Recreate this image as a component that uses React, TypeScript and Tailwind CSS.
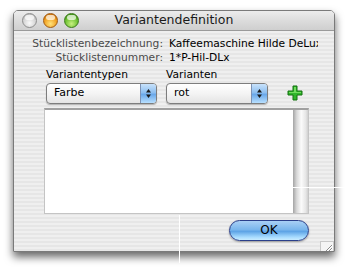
import React from "react";

const font = "font-['DejaVu_Sans','Liberation_Sans',sans-serif]";

function Light({ color }: { color: "gray" | "orange" | "green" }) {
  const bg =
    color === "gray"
      ? "bg-[radial-gradient(circle_at_50%_70%,#fafafa,#d4d4d4_55%,#a8a8a8)] border-[#8c8c8c]"
      : color === "orange"
        ? "bg-[radial-gradient(circle_at_50%_75%,#ffe27a,#f0a020_55%,#b85a08)] border-[#a05a10]"
        : "bg-[radial-gradient(circle_at_50%_75%,#c8f080,#6cc030_55%,#2e7a10)] border-[#3a7a18]";
  return (
    <div className={`relative h-[15px] w-[15px] rounded-full border ${bg}`}>
      <div className="mx-auto mt-[1px] h-[5px] w-[9px] rounded-full bg-white/70" />
    </div>
  );
}

function Popup({ label, width }: { label: string; width: string }) {
  return (
    <div
      className={`flex h-[21px] ${width} overflow-hidden rounded-[4px] border border-[#7d7d7d] bg-[linear-gradient(#ffffff,#f4f4f4_50%,#e4e4e4)] shadow-[0_1px_1px_rgba(0,0,0,0.25)]`}
    >
      <div className="flex flex-1 items-center pl-[7px] text-[11px] text-black">{label}</div>
      <div className="flex w-[16px] items-center justify-center border-l border-[#7d92b4] bg-[linear-gradient(#c8e2fb,#8ebff0_45%,#6aa8ea_55%,#b8e0ff)]">
        <svg width="7" height="11" viewBox="0 0 7 11">
          <path d="M3.5 1 L6 4.5 H1 Z" fill="#1a1a1a" />
          <path d="M3.5 10 L6 6.5 H1 Z" fill="#1a1a1a" />
        </svg>
      </div>
    </div>
  );
}

export default function App() {
  return (
    <div className={`relative h-[273px] w-[345px] overflow-hidden bg-white ${font}`}>
      <div className="ml-[13px] mt-[10px] flex h-[242px] w-[322px] flex-col overflow-hidden rounded-t-[5px] border border-[#7a7a7a] shadow-[0_5px_8px_rgba(0,0,0,0.6)]">
        {/* title bar */}
        <div className="grid h-[22px] grid-cols-[1fr_auto_1fr] items-center border-b border-[#9a9a9a] bg-[linear-gradient(#ececec,#dcdcdc_50%,#cfcfcf)]">
          <div className="flex items-center gap-[6px] pl-[8px]">
            <Light color="gray" />
            <Light color="orange" />
            <Light color="green" />
          </div>
          <div className="text-[12.5px] text-[#1a1a1a]">Variantendefinition</div>
          <div />
        </div>

        {/* body */}
        <div className="flex flex-1 flex-col bg-[repeating-linear-gradient(#efefef_0px,#efefef_2px,#e6e6e6_2px,#e6e6e6_4px)] text-[10.7px]">
          <div className="mt-[6px] grid grid-cols-[149px_149px] gap-x-[6px] leading-[14px]">
            <div className="text-right text-[#4a4a4a]">Stücklistenbezeichnung:</div>
            <div className="overflow-hidden whitespace-nowrap text-black">Kaffeemaschine Hilde DeLuxe</div>
            <div className="text-right text-[#4a4a4a]">Stücklistennummer:</div>
            <div className="text-black">1*P-Hil-DLx</div>
          </div>

          <div className="mt-[3px] flex pl-[32px] leading-[14px] text-black">
            <div className="w-[120px]">Variantentypen</div>
            <div>Varianten</div>
          </div>

          <div className="mt-[1px] flex items-center pl-[32px]">
            <Popup label="Farbe" width="w-[111px]" />
            <div className="ml-[9px]">
              <Popup label="rot" width="w-[102px]" />
            </div>
            <svg className="ml-[19px]" width="16" height="16" viewBox="0 0 16 16">
              <path
                d="M6 1 H10 V6 H15 V10 H10 V15 H6 V10 H1 V6 H6 Z"
                fill="#2fb52a"
                stroke="#13700f"
                strokeWidth="1"
              />
              <path d="M7 2 H9 V7 H14 V8 H2 V7 H7 Z" fill="#6fdc5c" />
            </svg>
          </div>

          <div className="ml-[30px] mt-[4px] flex h-[106px] w-[265px] border border-t-2 border-[#c4c4c4] border-t-[#a0a0a0] bg-white">
            <div className="flex-1" />
            <div className="w-[15px] bg-[linear-gradient(to_right,#a4a4a4,#d8d8d8_25%,#fbfbfb_55%,#e6e6e6_85%,#cfcfcf)]" />
          </div>

          <div className="mt-[6px] flex">
            <div className="ml-[215px] flex h-[21px] w-[80px] items-center justify-center rounded-full border border-[#2a3f8a] bg-[linear-gradient(#a9d0f5,#7ab6ec_45%,#5ea4e6_55%,#a8dcff_85%,#c8ecff)] text-[12px] text-black shadow-[0_1px_2px_rgba(0,0,0,0.35)]">
              OK
            </div>
          </div>

          <div className="mt-auto flex justify-end">
            <svg width="14" height="13" viewBox="0 0 14 13">
              <rect x="0.5" y="0.5" width="13" height="12.5" fill="#f4f4f4" stroke="#c8c8c8" />
              <path d="M12 4 L4 12 M12 7 L7 12 M12 10 L10 12" stroke="#8a8a8a" strokeWidth="1" />
              <path d="M13 4 L5 12 M13 7 L8 12" stroke="#ffffff" strokeWidth="1" />
            </svg>
          </div>
        </div>
      </div>

      {/* stray guide lines in the capture */}
      <div className="absolute left-[179px] top-[215px] h-[48px] w-px bg-white" />
      <div className="absolute left-[289px] top-[187px] h-px w-[56px] bg-white" />
    </div>
  );
}
